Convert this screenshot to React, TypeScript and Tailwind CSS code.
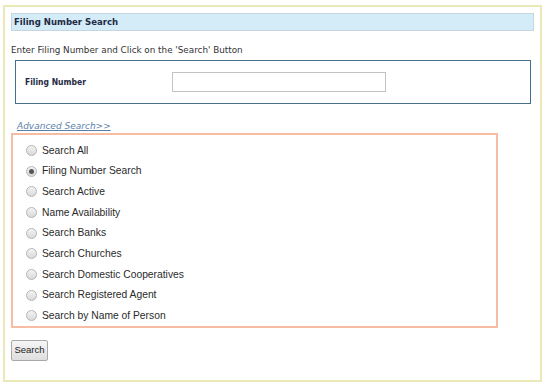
const options = [
  'Search All',
  'Filing Number Search',
  'Search Active',
  'Name Availability',
  'Search Banks',
  'Search Churches',
  'Search Domestic Cooperatives',
  'Search Registered Agent',
  'Search by Name of Person',
]

function Radio({ checked }: { checked?: boolean }) {
  return (
    <span className="flex h-[11px] w-[11px] shrink-0 items-center justify-center rounded-full border border-[#b5b5b5] bg-gradient-to-b from-[#f4f4f4] to-[#d9d9d9]">
      {checked && <span className="h-[5px] w-[5px] rounded-full bg-[#555]" />}
    </span>
  )
}

export default function App() {
  return (
    <div className="h-[387px] w-[550px] bg-white pl-[3px] pt-[5px] font-['DejaVu_Sans',sans-serif]">
      <div className="flex h-[377px] w-[539px] flex-col border-2 border-[#ece9b9] pl-[6px] pt-[6px]">
        <div className="flex h-[18px] w-[523px] items-center border border-[#c5d6df] bg-[#d4ebf8] pl-[2px] font-['DejaVu_Sans_Condensed',sans-serif] text-[9.5px] font-bold text-[#1f2a44]">
          Filing Number Search
        </div>
        <p className="mt-[13px] text-[8.8px] leading-[12px] text-[#333]">
          Enter Filing Number and Click on the 'Search' Button
        </p>
        <div className="ml-[4px] mt-[4px] flex h-[44px] w-[516px] items-center border-[1.5px] border-[#44708a] pl-[9px]">
          <span className="w-[147px] font-['DejaVu_Sans_Condensed',sans-serif] text-[8.5px] font-bold text-[#1f2a44]">
            Filing Number
          </span>
          <input className="h-[20px] w-[214px] border border-[#c3c3c3] bg-white outline-none" />
        </div>
        <a className="ml-[6px] mt-[16px] text-[9px] italic leading-[12px] text-[#5b7fa8] underline">
          Advanced Search&gt;&gt;
        </a>
        <div className="mt-[1px] flex h-[195px] w-[487px] flex-col border-2 border-[#f7bda2] pl-[13px] pt-[5px] font-['Liberation_Sans',sans-serif]">
          {options.map((o, i) => (
            <label key={o} className="flex h-[20.75px] items-center gap-[5px] text-[10.3px] text-[#2a2a2a]">
              <Radio checked={i === 1} />
              <span>{o}</span>
            </label>
          ))}
        </div>
        <button className="mt-[12px] h-[21px] w-[37px] rounded-[2px] border border-[#a9a9a9] bg-gradient-to-b from-[#f6f6f6] to-[#dedede] font-['Liberation_Sans',sans-serif] text-[9.5px] text-[#222]">
          Search
        </button>
      </div>
    </div>
  )
}
